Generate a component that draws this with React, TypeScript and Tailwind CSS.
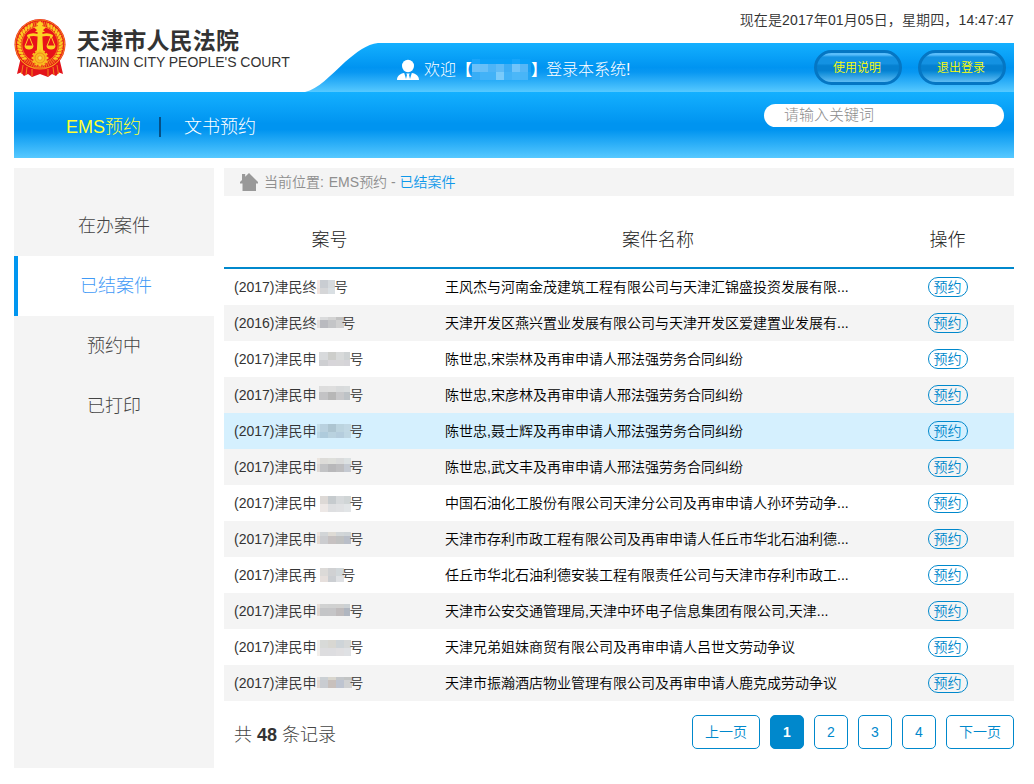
import React from "react";

type MosaicData = {
  top: number;
  left: number;
  width: number;
  cols: number[];
  rows: number[];
  colors: string[];
};

type CaseRow = { prefix: string; name: string; mosaic: MosaicData };

const cases: CaseRow[] = [
  {
    prefix: "(2017)津民终",
    name: "王风杰与河南金茂建筑工程有限公司与天津汇锦盛投资发展有限...",
    mosaic: { top: 11, left: 0, width: 18, cols: [3, 8, 7], rows: [8, 6], colors: ["#f6eae6", "#c9cdd2", "#d6dadd", "#f1e4df", "#d5d6d8", "#d9dfe3"] },
  },
  {
    prefix: "(2016)津民终",
    name: "天津开发区燕兴置业发展有限公司与天津开发区爱建置业发展有...",
    mosaic: { top: 12, left: 0, width: 25.5, cols: [3, 8, 8, 8], rows: [3, 8], colors: ["#efefef", "#dadbdc", "#d3d3d3", "#c2c2c2", "#e4dedb", "#b9babf", "#c4c5c7", "#d0d0d0"] },
  },
  {
    prefix: "(2017)津民申",
    name: "陈世忠,宋崇林及再审申请人邢法强劳务合同纠纷",
    mosaic: { top: 11, left: 2, width: 33.5, cols: [9, 8, 8, 6], rows: [8, 6], colors: ["#d8dadc", "#cdcecb", "#d8dada", "#cfd3d4", "#cecfd2", "#d7d5d9", "#d7d6d8", "#d5d4d8"] },
  },
  {
    prefix: "(2017)津民申",
    name: "陈世忠,宋彦林及再审申请人邢法强劳务合同纠纷",
    mosaic: { top: 9, left: 2, width: 33.5, cols: [9, 8, 8, 6], rows: [6, 8], colors: ["#dddddd", "#dedede", "#d8dadb", "#d9dcdd", "#c3c3c5", "#b7b7b7", "#c8c8ca", "#bdc2c6"] },
  },
  {
    prefix: "(2017)津民申",
    name: "陈世忠,聂士辉及再审申请人邢法强劳务合同纠纷",
    mosaic: { top: 11, left: 0, width: 33.5, cols: [3, 8, 8, 8, 7], rows: [8, 6], colors: ["#c5dfe9", "#b9d1df", "#adc5d1", "#bcd4df", "#c1d8e4", "#bbd7e5", "#aecbdc", "#b9d2df", "#b5cddd", "#bfd7e3"] },
  },
  {
    prefix: "(2017)津民申",
    name: "陈世忠,武文丰及再审申请人邢法强劳务合同纠纷",
    mosaic: { top: 9, left: 0, width: 33.5, cols: [3, 8, 8, 8, 7], rows: [6, 8], colors: ["#ebe5df", "#dddcd9", "#dedfdb", "#dadbdb", "#dce1e2", "#dfd9d5", "#c2c3c5", "#b8b8ba", "#bebec0", "#c5cad2"] },
  },
  {
    prefix: "(2017)津民申",
    name: "中国石油化工股份有限公司天津分公司及再审申请人孙环劳动争...",
    mosaic: { top: 11, left: 3, width: 33.5, cols: [8, 8, 8, 7], rows: [8, 8], colors: ["#ddd9d6", "#c6cbce", "#d6d9db", "#d0d5d6", "#ede8e6", "#dedfe1", "#e0e1e3", "#e2e5e7"] },
  },
  {
    prefix: "(2017)津民申",
    name: "天津市存利市政工程有限公司及再审申请人任丘市华北石油利德...",
    mosaic: { top: 11, left: 0, width: 33.5, cols: [3, 8, 8, 8, 7], rows: [4, 8], colors: ["#eee4de", "#d2d5d7", "#dedbd5", "#d2d6d8", "#cfd4d7", "#e4d9d0", "#cbcccf", "#c6c1c1", "#c0c1c1", "#b9bec8"] },
  },
  {
    prefix: "(2017)津民再",
    name: "任丘市华北石油利德安装工程有限责任公司与天津市存利市政工...",
    mosaic: { top: 11, left: 3, width: 25.5, cols: [8, 8, 8], rows: [8, 6], colors: ["#dcdad8", "#d0d1d3", "#d1d7da", "#e6dfdc", "#cbced2", "#dfe1e4"] },
  },
  {
    prefix: "(2017)津民申",
    name: "天津市公安交通管理局,天津中环电子信息集团有限公司,天津...",
    mosaic: { top: 11, left: 0, width: 33.5, cols: [3, 8, 8, 8, 6], rows: [4, 8], colors: ["#e6ddd6", "#d1d2d2", "#d0d1d1", "#d1d1d0", "#ccd1d4", "#ded5cf", "#c4c5c7", "#c5c5c7", "#bfbbbc", "#b0b6c0"] },
  },
  {
    prefix: "(2017)津民申",
    name: "天津兄弟姐妹商贸有限公司及再审申请人吕世文劳动争议",
    mosaic: { top: 11, left: 0, width: 33.5, cols: [3, 8, 8, 8, 7], rows: [8, 8], colors: ["#f2f0ed", "#d8dad8", "#d8d7d2", "#ced4d8", "#d6d8d8", "#f2eeea", "#dddddf", "#dddde0", "#e0dfe1", "#dfe1e4"] },
  },
  {
    prefix: "(2017)津民申",
    name: "天津市振瀚酒店物业管理有限公司及再审申请人鹿克成劳动争议",
    mosaic: { top: 12, left: 0, width: 33.5, cols: [3, 8, 8, 8, 8], rows: [3, 8], colors: ["#e8e3df", "#cbd0d4", "#d9d6ce", "#c4c7ca", "#c2c4c4", "#e2d7cf", "#c9ccd1", "#c8c0bc", "#bec4d0", "#d0d1d2"] },
  },
];

const rays = [0, 1, 2, 3, 4, 5, 6, 7, 8, 9, 10, 11];
const grains = [-66, -57, -48, -39, -30, -21, -12, -3, 6, 15, 24, 33, 42];

function Emblem() {
  return (
    <svg className="block h-[60px] w-[52px]" viewBox="0 0 52 60">
      <path d="M7 39 L3 56 L7 54.5 L10 58 L14 56 L18 59 L26 56 L34 59 L38 56 L42 58 L45 54.5 L49 56 L45 39Z" fill="#e3141b" />
      <path d="M9 47 L7.5 56 M13 49 L12 57 M18 51 V58 M43 47 L44.5 56 M39 49 L40 57 M34 51 V58" stroke="#f5a31c" strokeWidth="0.8" />
      <circle cx="26" cy="26.5" r="25.5" fill="#e8121a" />
      <circle cx="26" cy="26.5" r="24.6" fill="none" stroke="#f6a31b" strokeWidth="0.8" />
      <circle cx="26" cy="26.5" r="21" fill="none" stroke="#f07c1a" strokeWidth="4.6" strokeDasharray="1.2 0.8" />
      {grains.map((a) => (
        <g key={a} fill="#fbc924">
          <ellipse cx="46.9" cy="26.5" rx="2.5" ry="1.2" transform={`rotate(${a} 26 26.5) rotate(-38 46.9 26.5)`} />
          <ellipse cx="5.1" cy="26.5" rx="2.5" ry="1.2" transform={`rotate(${-a} 26 26.5) rotate(38 5.1 26.5)`} />
        </g>
      ))}
      <circle cx="26" cy="26.5" r="18.2" fill="#e8121a" stroke="#f8b820" strokeWidth="0.7" />
      <path d="M24.5 14 L26 2 L27.5 14Z M26 3 L29.5 6 L28 8 L32 9.5 L29 12 L31 14 H21 L23 12 L20 9.5 L24 8 L22.5 6Z" fill="#fcd324" />
      <path d="M13 17 Q18 14 23.5 16 V14 H28.5 V16 Q34 14 39 17 L38.5 19.2 Q33 17 28.4 18.5 L29.2 34 H22.8 L23.6 18.5 Q19 17 13.5 19.2Z" fill="#fcd324" />
      <path d="M15 18 L11 28 H19Z M37 18 L33 28 H41Z" fill="none" stroke="#fcd324" strokeWidth="1" />
      <path d="M10.5 28 H19.5 Q19 31.5 15 31.5 Q11 31.5 10.5 28Z M32.5 28 H41.5 Q41 31.5 37 31.5 Q33 31.5 32.5 28Z" fill="#fcd324" />
      <g fill="#f9bd20">
        <circle cx="26" cy="40" r="7" />
        {rays.map((r) => (
          <rect key={r} x="24.8" y="31.6" width="2.4" height="3" transform={`rotate(${r * 30} 26 40)`} />
        ))}
      </g>
      <circle cx="26" cy="40" r="5" fill="none" stroke="#ec721b" strokeWidth="0.7" />
      <circle cx="26" cy="40" r="2.2" fill="#fee052" stroke="#ec721b" strokeWidth="0.6" />
      <path d="M6 41 Q13 51 26 50 Q39 51 46 41" fill="none" stroke="#f6a31b" strokeWidth="1" />
    </svg>
  );
}

function Mosaic({ cols, rows, colors }: { cols: number[]; rows: number[]; colors: string[] }) {
  return (
    <span
      className="grid shrink-0"
      style={{ gridTemplateColumns: cols.map((c) => `${c}px`).join(" "), gridTemplateRows: rows.map((r) => `${r}px`).join(" ") }}
    >
      {colors.map((c, i) => (
        <span key={i} style={{ background: c }} />
      ))}
    </span>
  );
}

function GlossButton({ label }: { label: string }) {
  return (
    <button className="flex h-[35px] w-[88px] items-center justify-center rounded-full border-[3px] border-[#0576c3] bg-[linear-gradient(to_bottom,#59bdfb_0%,#59bdfb_6%,#1492e2_14%,#1492e2_36%,#0580d0_44%,#0580d0_60%,#0c8ad8_66%,#5fbdf3_100%)] pr-0.5 text-[12px] font-[350] text-[#ffff00]">
      {label}
    </button>
  );
}

function Header() {
  return (
    <header className="flex h-[92px] justify-between">
      <div className="flex pt-[18px]">
        <Emblem />
        <div className="ml-[11px] pt-[10px] text-[#333]">
          <h1 className="h-[26px] text-[23px] leading-[27px] font-bold tracking-[0.15px] whitespace-nowrap">天津市人民法院</h1>
          <p className="text-[14px] leading-[17px] tracking-[-0.04px] whitespace-nowrap">TIANJIN CITY PEOPLE'S COURT</p>
        </div>
      </div>
      <div className="flex w-[709px] flex-col">
        <div className="h-[43px] text-right text-[14px] leading-[40px] font-[350] tracking-[0.13px] text-[#333]">
          现在是2017年01月05日，星期四，14:47:47
        </div>
        <div className="flex h-[49px]">
          <svg className="block h-[49px] w-[73px] shrink-0" viewBox="0 0 73 49">
            <defs>
              <linearGradient id="cap" x1="0" y1="0" x2="0" y2="49" gradientUnits="userSpaceOnUse">
                <stop offset="0" stopColor="#14b0ff" />
                <stop offset="0.5" stopColor="#0094f1" />
                <stop offset="0.6" stopColor="#0998f2" />
                <stop offset="1" stopColor="#57c9ff" />
              </linearGradient>
            </defs>
            <path d="M0 49 C13 46 25 33 40 19 C51 9.5 62 1 73 0 V49Z" fill="url(#cap)" />
          </svg>
          <div className="flex flex-1 bg-[linear-gradient(to_bottom,#14b0ff_0%,#0094f1_50%,#0998f2_60%,#57c9ff_100%)]">
            <svg className="mt-[16px] ml-[19px] block h-[22px] w-[22px]" viewBox="0 0 22 22" fill="#fff">
              <ellipse cx="11" cy="7" rx="6" ry="6.2" />
              <path d="M0 21 C0 17 3 14.5 7.2 14 L9 20 L10 16 L9.2 14.5 H12.8 L12 16 L13 20 L14.8 14 C19 14.5 22 17 22 21Z" />
            </svg>
            <div className="ml-[5px] flex h-[49px] text-[16px] leading-[53px] font-light whitespace-nowrap text-white">
              <span>欢迎</span>
              <span className="w-4 font-bold">【</span>
              <span className="mt-[16px]">
                <Mosaic
                  cols={[8, 8, 8, 8, 8, 8, 8, 3]}
                  rows={[5, 8, 8]}
                  colors={[
                    "#18a5fb", "#0aa0f8", "#0aa0f8", "#0aa0f8", "#08a0f8", "#15a5fa", "#08a0f8", "#08a0f8",
                    "#6bc0f9", "#67bff8", "#4db4f7", "#5ebbf7", "#3dadf5", "#70c4fa", "#55b7f7", "#18a0f3",
                    "#38adf6", "#42b2f7", "#42b2f7", "#7acbfb", "#42b2f7", "#4bb7f8", "#48b5f7", "#22a5f4",
                  ]}
                />
              </span>
              <span className="w-[15px] font-bold">】</span>
              <span>登录本系统!</span>
            </div>
            <div className="mt-[7px] mr-2 ml-auto flex gap-4">
              <GlossButton label="使用说明" />
              <GlossButton label="退出登录" />
            </div>
          </div>
        </div>
      </div>
    </header>
  );
}

function SideItem({ label, active = false }: { label: string; active?: boolean }) {
  return (
    <a
      className={
        active
          ? "block h-[60px] border-l-4 border-[#0096f0] bg-white text-center text-[18px] leading-[60px] font-light text-[#3f9af6]"
          : "block h-[60px] text-center text-[18px] leading-[60px] font-light text-[#444]"
      }
    >
      {label}
    </a>
  );
}

function PageButton({ label, wide = false, active = false }: { label: string; wide?: boolean; active?: boolean }) {
  const size = wide ? "w-[68px]" : "w-[34px]";
  const tone = active ? "bg-[#0088cc] font-bold text-white" : "bg-white font-[350] text-[#0088cc]";
  return (
    <button className={`h-[34px] rounded-[5px] border border-[#0088cc] text-[14px] ${size} ${tone}`}>{label}</button>
  );
}

export default function App() {
  return (
    <div className="h-[784px] overflow-hidden bg-white pr-5 pl-[14px] font-['Liberation_Sans','Noto_Sans_CJK_SC',sans-serif]">
      <Header />
      <nav className="flex h-[66px] justify-between bg-[linear-gradient(to_bottom,#14b0ff_0%,#0094f0_48%,#0094f0_57%,#57c9ff_100%)]">
        <div className="flex h-[70px] items-center pl-[52px] text-[18px] font-light text-white">
          <a className="w-[93px] text-[#ffff33]">EMS预约</a>
          <span className="h-5 w-0.5 bg-[#064f85]" />
          <a className="ml-[23px]">文书预约</a>
        </div>
        <input
          placeholder="请输入关键词"
          className="mt-3 mr-[10px] h-[23px] w-[240px] rounded-full bg-white px-5 pb-[2px] text-[15px] leading-[21px] font-light placeholder:text-[#8c8c8c]"
        />
      </nav>
      <div className="mt-[10px] flex gap-[10px]">
        <aside className="h-[600px] w-[200px] shrink-0 bg-[#f4f4f4] pt-7">
          <SideItem label="在办案件" />
          <SideItem label="已结案件" active />
          <SideItem label="预约中" />
          <SideItem label="已打印" />
        </aside>
        <main className="w-[790px]">
          <div className="flex h-7 items-center bg-[#f4f4f4] pl-4 text-[14px] font-[350] whitespace-nowrap text-[#8f8f8f]">
            <svg className="mr-[6px] h-[18px] w-[18px]" viewBox="0 0 18 18" fill="#999">
              <path d="M9 0 L18 9 V10.5 H16 V18 H2.5 V10.5 H0 V9 L2 7 V1 H5.2 V3.8Z" />
            </svg>
            <span>当前位置: <span className="ml-px">EMS</span>预约 -&nbsp;</span>
            <span className="text-[#0e98ea]">已结案件</span>
          </div>
          <div className="mt-[17px] grid h-14 grid-cols-[211px_446px_133px] border-b-2 border-[#0088cc] text-center text-[18px] leading-[54px] font-light text-[#222]">
            <span>案号</span>
            <span>案件名称</span>
            <span>操作</span>
          </div>
          {cases.map((c, i) => (
            <div
              key={i}
              className={`grid h-9 grid-cols-[211px_446px_133px] text-[14px] leading-9 font-[350] whitespace-nowrap ${
                i === 4 ? "bg-[#d5f0fe]" : i % 2 === 1 ? "bg-[#f4f4f4]" : "bg-white"
              }`}
            >
              <div className="flex pl-[10px] text-[#333]">
                <span className="w-[83px]">{c.prefix}</span>
                <span className="shrink-0" style={{ width: c.mosaic.width, paddingTop: c.mosaic.top, paddingLeft: c.mosaic.left }}>
                  <Mosaic cols={c.mosaic.cols} rows={c.mosaic.rows} colors={c.mosaic.colors} />
                </span>
                <span className="-ml-px">号</span>
              </div>
              <div className="pl-[10px] text-black">{c.name}</div>
              <div className="flex items-center justify-center">
                <button className="h-5 w-10 rounded-full border border-[#0088cc] text-[14px] leading-[18px] text-[#0088cc]">预约</button>
              </div>
            </div>
          ))}
          <div className="mt-[14px] flex h-[34px] justify-between">
            <p className="pl-[10px] text-[18px] leading-[40px] font-light text-[#444]">
              共 <b className="font-bold text-[#333]">48</b> 条记录
            </p>
            <div className="flex gap-[10px]">
              <PageButton label="上一页" wide />
              <PageButton label="1" active />
              <PageButton label="2" />
              <PageButton label="3" />
              <PageButton label="4" />
              <PageButton label="下一页" wide />
            </div>
          </div>
        </main>
      </div>
    </div>
  );
}
